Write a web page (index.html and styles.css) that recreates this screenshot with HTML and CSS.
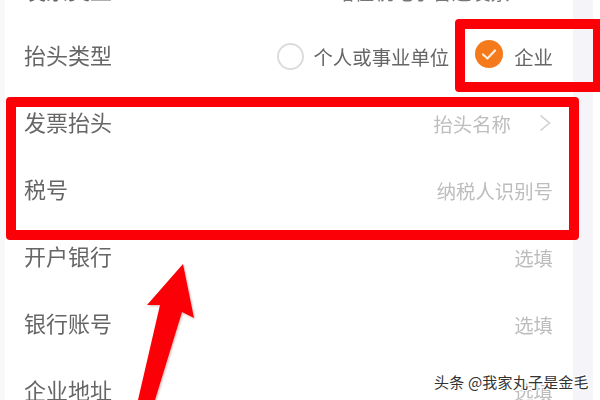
FILE: index.html
```html
<!DOCTYPE html>
<html lang="zh-CN">
<head>
    <meta charset="UTF-8">
    <meta name="viewport" content="width=device-width, initial-scale=1.0">
    <title>发票抬头</title>
    <link rel="stylesheet" href="styles.css">
</head>
<body>
    <div class="page">
        <div class="gutter"></div>
        <div class="form">
            <div class="row">
                <div class="label">发票类型</div>
                <div class="value chosen">增值税电子普通发票</div>
            </div>
            <div class="row">
                <div class="label">抬头类型</div>
                <div class="options">
                    <span class="radio"></span>
                    <span class="value dark">个人或事业单位</span>
                    <svg class="radio-on" viewBox="0 0 28 28" aria-hidden="true">
                        <circle cx="14" cy="14" r="14" fill="#f47a1c"/>
                        <path d="M8 14.5l4.4 4L20 10.5" fill="none" stroke="#fdeee0" stroke-width="2.2" stroke-linecap="round" stroke-linejoin="round"/>
                    </svg>
                    <span class="value dark">企业</span>
                </div>
            </div>
            <div class="row">
                <div class="label">发票抬头</div>
                <div class="picker">
                    <span class="value">抬头名称</span>
                    <svg class="chevron" viewBox="0 0 12 18" aria-hidden="true">
                        <path d="M1.5 1.5L10.5 9L1.5 16.5" fill="none" stroke="#cfcfcf" stroke-width="1.6"/>
                    </svg>
                </div>
            </div>
            <div class="row">
                <div class="label">税号</div>
                <div class="value">纳税人识别号</div>
            </div>
            <div class="row">
                <div class="label">开户银行</div>
                <div class="value">选填</div>
            </div>
            <div class="row">
                <div class="label">银行账号</div>
                <div class="value">选填</div>
            </div>
            <div class="row">
                <div class="label">企业地址</div>
                <div class="value">选填</div>
            </div>
        </div>
        <div class="strip"></div>
    </div>

    <!-- annotations drawn over the screenshot -->
    <div class="mark mark-type"></div>
    <div class="mark mark-title"></div>
    <svg class="arrow" viewBox="0 0 600 400" aria-hidden="true">
        <path d="M183 264L147 305L160 305L138 400L155 400L182 312L194 318Z" fill="#fb0006"/>
    </svg>
    <div class="watermark">头条 @我家丸子是金毛</div>
</body>
</html>
```

FILE: styles.css
```css
*{
    box-sizing: border-box;
}
html, body{
    margin: 0;
    height: 100%;
    overflow: hidden;
    background-color: #fff;
    font-family: "Noto Sans CJK SC", "Liberation Sans", sans-serif;
}
.page{
    display: flex;
    width: 600px;
    height: 400px;
    padding-right: 7px;
    overflow: hidden;
    filter: blur(0.6px);
}
.gutter{
    width: 5px;
    background-color: #f8f8f8;
}
.form{
    width: 568px;
    margin-top: -47px;
    background-color: #fff;
}
.strip{
    width: 20px;
    background-color: #f5f4f8;
}
.row{
    display: flex;
    justify-content: space-between;
    align-items: center;
    height: 67px;
    padding: 0 20px 0 19px;
}
.row:first-child{
    padding-top: 4px;
}
.label{
    font-size: 22px;
    line-height: 30px;
    color: #666;
}
.value{
    margin-top: 7px;
    font-size: 19.4px;
    line-height: 26px;
    color: #bdbdbd;
}
.value.dark{
    color: #666;
}
.value.chosen{
    margin-right: 43px;
    color: #777;
}
.options{
    display: flex;
    align-items: center;
}
.radio{
    width: 27px;
    height: 27px;
    margin: 5px 9px 0 0;
    border: 2px solid #dcdcdc;
    border-radius: 50%;
}
.radio-on{
    width: 28px;
    height: 28px;
    margin: 0 11px 0 26px;
}
.picker{
    display: flex;
    align-items: center;
}
.chevron{
    width: 12px;
    height: 18px;
    margin: 4px 2px 0 28px;
}

/* red annotation boxes and arrow */
.mark{
    position: absolute;
    border: 10px solid #fb0006;
    border-radius: 4px;
}
.mark-type{
    left: 455px;
    top: 19px;
    width: 148px;
    height: 73px;
}
.mark-title{
    left: 6px;
    top: 97px;
    width: 573px;
    height: 143px;
}
.arrow{
    position: absolute;
    left: 0;
    top: 0;
    width: 600px;
    height: 400px;
    filter: drop-shadow(1px 1px 1px rgba(120, 0, 0, 0.3));
}
.watermark{
    position: absolute;
    left: 434px;
    top: 371px;
    font-size: 15px;
    line-height: 22px;
    letter-spacing: 0.2px;
    white-space: nowrap;
    color: #333;
    text-shadow: 1px 1px 0 #fff, -1px -1px 0 #fff, 1px -1px 0 #fff, -1px 1px 0 #fff;
}
```
